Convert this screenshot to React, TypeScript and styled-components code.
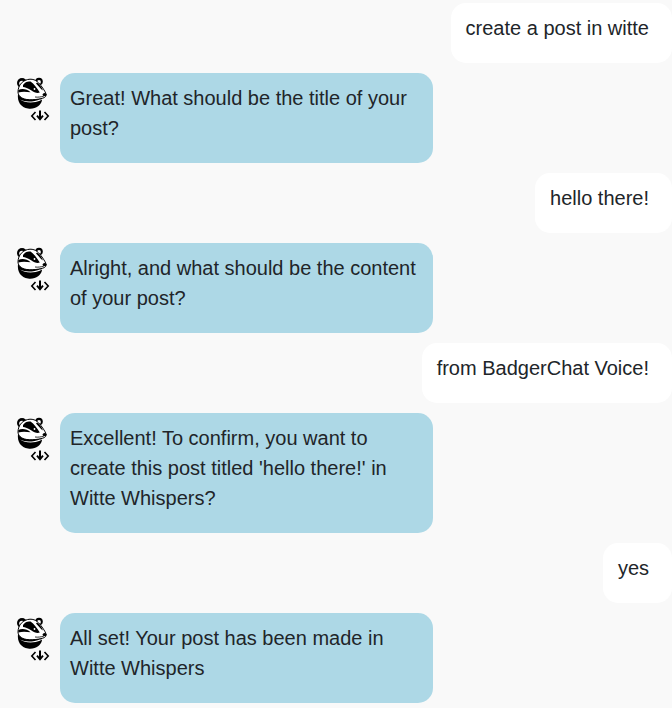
import React from 'react';
import styled, { createGlobalStyle } from 'styled-components';

const GlobalStyle = createGlobalStyle`
  html, body {
    margin: 0;
    padding: 0;
    background: #f9f9f9;
    overflow: hidden;
  }
`;

const messages = [
  { id: 1, from: 'user', text: 'create a post in witte' },
  { id: 2, from: 'bot', text: 'Great! What should be the title of your post?' },
  { id: 3, from: 'user', text: 'hello there!' },
  { id: 4, from: 'bot', text: 'Alright, and what should be the content of your post?' },
  { id: 5, from: 'user', text: 'from BadgerChat Voice!' },
  { id: 6, from: 'bot', text: "Excellent! To confirm, you want to create this post titled 'hello there!' in Witte Whispers?" },
  { id: 7, from: 'user', text: 'yes' },
  { id: 8, from: 'bot', text: 'All set! Your post has been made in Witte Whispers' },
];

const BadgerIcon: React.FC = () => (
  <svg width="36" height="46" viewBox="0 0 36 46">
    {/* ears */}
    <circle cx="7" cy="7" r="5" fill="#000" />
    <circle cx="7" cy="7.6" r="2.8" fill="#fff" />
    <circle cx="24" cy="5.5" r="3.8" fill="#000" />
    <circle cx="24" cy="6" r="1.9" fill="#fff" />
    {/* chest */}
    <path d="M3 18 C2 26 6 31.5 13 32.5 C20 33.5 26 30 27 24 L16 18 Z" fill="#000" />
    {/* head */}
    <path d="M3 16 C3 9 8 3.6 15 3.2 C21 3 24 7 27 11 C29 14 31 16.5 31 19 C31 21.5 28.5 22 26 22.6 C20 24 9 25 5 20.5 C3.7 19 3 17.6 3 16 Z" fill="#fff" stroke="#000" strokeWidth="1" />
    {/* eye stripes */}
    <path d="M8 9 C10 6 13 5 15.5 5.6 C19 8 22 12 24.8 16.6 C22 17.6 19 16.4 16.5 14.6 C13 12.2 10 11 8 11 Z" fill="#000" />
    <path d="M22 6.6 C24.6 8 26.4 11 28 14.4 C26 13.4 24 10.6 21 7.4 Z" fill="#000" />
    <path d="M3.4 14 C7 12 12 13 15.6 16.2 C12 15.8 7 15.4 3.4 16.4 Z" fill="#000" />
    <circle cx="19.5" cy="13" r="0.9" fill="#fff" />
    {/* nose and mouth */}
    <ellipse cx="29.6" cy="18.6" rx="2" ry="1.7" fill="#000" />
    <path d="M20 21 C23 21.4 26 21 29 20" fill="none" stroke="#000" strokeWidth="0.8" />
    <path d="M5 23.6 C10 26.2 18 26.2 25.6 23.2 L25.6 24.6 C19 27.4 10 27.4 5 23.6 Z" fill="#fff" />
    {/* code arrow */}
    <path d="M20.5 36 L16.8 40 L20.5 44" fill="none" stroke="#000" strokeWidth="1.6" />
    <path d="M29.5 36 L33.2 40 L29.5 44" fill="none" stroke="#000" strokeWidth="1.6" />
    <path d="M25 34.5 V43" fill="none" stroke="#000" strokeWidth="2" />
    <path d="M22 39.6 L25 43.4 L28 39.6" fill="none" stroke="#000" strokeWidth="1.8" />
  </svg>
);

const App: React.FC = () => (
  <Page>
    <GlobalStyle />
    {messages.map(msg =>
      msg.from === 'user' ? (
        <UserRow key={msg.id}>
          <UserBubble>{msg.text}</UserBubble>
        </UserRow>
      ) : (
        <BotRow key={msg.id}>
          <Avatar>
            <BadgerIcon />
          </Avatar>
          <BotBubble>{msg.text}</BotBubble>
        </BotRow>
      )
    )}
  </Page>
);

const Page = styled.div`
  display: flex;
  flex-direction: column;
  gap: 10px;
  box-sizing: border-box;
  width: 672px;
  height: 708px;
  padding-top: 3px;
  overflow: hidden;
  background: #f9f9f9;
  font-family: 'Liberation Sans', Arial, sans-serif;
  font-size: 20px;
  line-height: 30px;
  color: #212529;
`;

const UserRow = styled.div`
  display: flex;
  justify-content: flex-end;
`;

const BotRow = styled.div`
  display: flex;
  align-items: flex-start;
  padding-left: 15px;
`;

const Avatar = styled.div`
  flex: none;
  width: 45px;
  height: 46px;
  padding-top: 3px;
`;

const UserBubble = styled.div`
  padding: 10px 23px 20px 15px;
  background: #fff;
  border-radius: 15px;
`;

const BotBubble = styled.div`
  box-sizing: border-box;
  width: 373px;
  padding: 10px 10px 20px;
  background: #add8e6;
  border-radius: 15px;
`;

export default App;
